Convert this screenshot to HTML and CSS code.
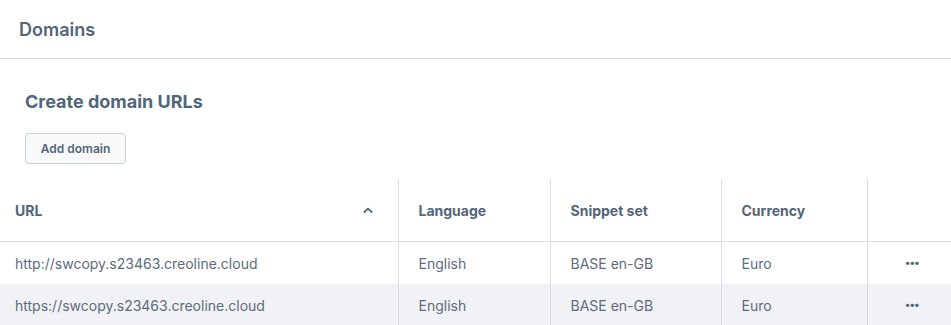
FILE: index.html
```html
<!DOCTYPE html>
<html lang="en">
<head>
  <meta charset="UTF-8">
  <title>Domains</title>
  <link rel="stylesheet" href="styles.css">
</head>
<body>

  <div class="card">
    <div class="card-header">
      <h1>Domains</h1>
    </div>

    <div class="card-body">
      <h2>Create domain URLs</h2>
      <button class="button">Add domain</button>
    </div>

    <table class="domain-table">
      <colgroup>
        <col class="col-url">
        <col class="col-language">
        <col class="col-snippet">
        <col class="col-currency">
        <col class="col-actions">
      </colgroup>
      <thead>
        <tr>
          <th class="cell-url">
            <span class="th-inner">URL
              <svg class="sort-icon" width="10" height="6" viewBox="0 0 10 6"><path d="M1.5 5 L5 1.6 L8.5 5" fill="none" stroke="#52667a" stroke-width="1.8" stroke-linecap="round" stroke-linejoin="round"/></svg>
            </span>
          </th>
          <th>Language</th>
          <th>Snippet set</th>
          <th>Currency</th>
          <th></th>
        </tr>
      </thead>
      <tbody>
        <tr>
          <td class="cell-url">http://swcopy.s23463.creoline.cloud</td>
          <td>English</td>
          <td>BASE en-GB</td>
          <td>Euro</td>
          <td class="cell-actions"><span class="dots">&middot;&middot;&middot;</span></td>
        </tr>
        <tr class="striped">
          <td class="cell-url">https://swcopy.s23463.creoline.cloud</td>
          <td>English</td>
          <td>BASE en-GB</td>
          <td>Euro</td>
          <td class="cell-actions"><span class="dots">&middot;&middot;&middot;</span></td>
        </tr>
      </tbody>
    </table>
  </div>

</body>
</html>
```

FILE: styles.css
```css
/* Variables */
:root {
  --heading-color: #52667a;
  --text-color: #52667a;
  --border-color: #d9dde3;
  --striped-bg: #f0f2f5;
}

/* General */
body {
  margin: 0;
  font-family: 'Inter', 'Noto Sans', sans-serif;
  color: var(--text-color);
  background: #fff;
  overflow: hidden;
}

.card-header {
  height: 58px;
  padding: 0 19px;
  border-bottom: 1px solid var(--border-color);
  display: flex;
  align-items: center;
}

h1 {
  margin: 0;
  font-size: 18px;
  font-weight: 600;
  color: var(--heading-color);
  padding-top: 1px;
}

.card-body {
  padding: 32px 25px 15px;
}

h2 {
  margin: 0 0 20px;
  font-size: 18px;
  font-weight: 700;
  color: var(--heading-color);
  line-height: 22px;
}

.button {
  display: block;
  height: 31px;
  width: 101px;
  padding: 0;
  font-family: inherit;
  font-size: 12px;
  font-weight: 600;
  color: var(--heading-color);
  background: #f9fafb;
  border: 1px solid #c8d1da;
  border-radius: 4px;
}

/* Table */
.domain-table {
  width: 951px;
  border-collapse: collapse;
  table-layout: fixed;
  font-size: 14px;
}

.col-url { width: 398px; }
.col-language { width: 152px; }
.col-snippet { width: 171px; }
.col-currency { width: 146px; }

th, td {
  text-align: left;
  padding: 0 20px;
  border-left: 1px solid var(--border-color);
  white-space: nowrap;
}

th:first-child, td:first-child {
  border-left: none;
  padding-left: 15px;
}

th {
  height: 62px;
  font-weight: 700;
  color: var(--heading-color);
  border-bottom: 1px solid var(--border-color);
}

td {
  height: 42px;
  font-weight: 400;
  color: #5e6c7b;
}

.th-inner {
  display: flex;
  align-items: center;
  justify-content: space-between;
  padding-right: 5px;
}

.sort-icon {
  display: block;
}

.striped td {
  background: var(--striped-bg);
}

.cell-actions {
  text-align: center;
  padding: 0 0 0 4px;
}

.dots {
  font-size: 20px;
  font-weight: 700;
  letter-spacing: -2px;
  color: #52667a;
}
```
